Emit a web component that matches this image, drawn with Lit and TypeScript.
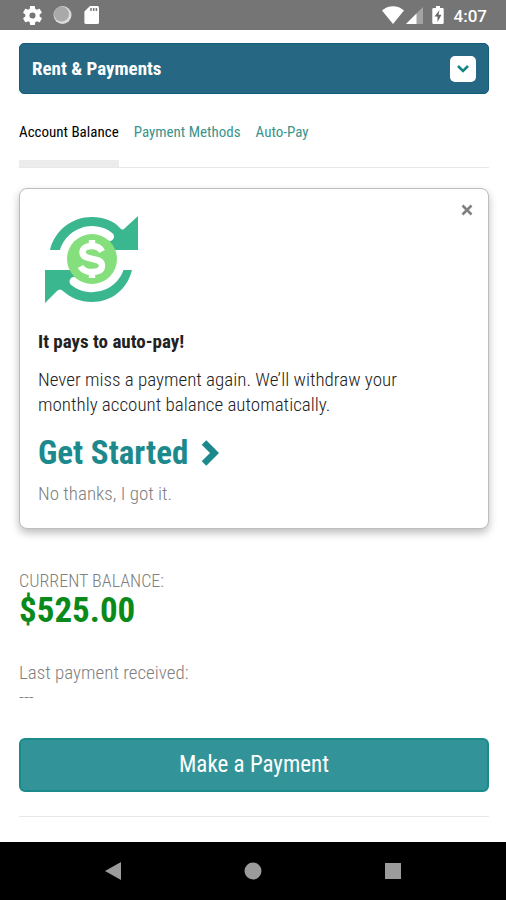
import { LitElement, html, css, svg } from "lit";
import { customElement, state } from "lit/decorators.js";

const gear = svg`<path fill="#fff" fill-rule="evenodd" d="M19.4 13c.04-.32.07-.65.07-1s-.03-.68-.07-1l2.1-1.65c.2-.15.25-.42.13-.64l-2-3.46c-.12-.22-.4-.3-.61-.22l-2.5 1c-.52-.4-1.08-.73-1.7-.98l-.37-2.65A.5.5 0 0 0 14 2h-4c-.25 0-.46.18-.5.42l-.37 2.65c-.62.25-1.18.59-1.7.98l-2.5-1c-.22-.08-.49 0-.61.22l-2 3.46c-.13.22-.07.49.12.64L4.57 11c-.04.32-.07.66-.07 1s.03.68.07 1l-2.13 1.65c-.19.15-.25.42-.12.64l2 3.46c.12.22.39.3.61.22l2.5-1c.52.4 1.08.73 1.7.98l.37 2.65c.04.24.25.42.5.42h4c.25 0 .46-.18.5-.42l.37-2.65c.62-.25 1.18-.58 1.7-.98l2.5 1c.22.08.49 0 .61-.22l2-3.46c.12-.22.07-.49-.13-.64zM12 15.2a3.2 3.2 0 1 1 0-6.4 3.2 3.2 0 0 1 0 6.4z"/>`;

@customElement("status-bar")
class StatusBar extends LitElement {
  static styles = css`
    :host {
      display: flex;
      align-items: center;
      justify-content: space-between;
      height: 30px;
      padding: 0 19px 0 21px;
      background: #757575;
      color: #fff;
      font: 500 17px/30px Roboto, sans-serif;
    }
    .group {
      display: flex;
      align-items: center;
    }
    .left {
      gap: 8px;
    }
    svg {
      display: block;
    }
    .time {
      margin-left: 6px;
      padding-top: 2px;
    }
  `;
  render() {
    return html`
      <div class="group left">
        <svg width="23" height="23" viewBox="0 0 24 24" aria-hidden="true">${gear}</svg>
        <svg width="22" height="22" viewBox="0 0 22 22" aria-hidden="true">
          <circle cx="10.500" cy="11" r="9" fill="#dcdcdc" />
          <circle cx="9.500" cy="10" r="7.600" fill="#a9a9a9" />
        </svg>
        <svg width="20" height="20" viewBox="0 0 20 20" aria-hidden="true">
          <path fill="#fff" d="M8 1h7.400A1.600 1.600 0 0 1 17 2.600v14.800A1.600 1.600 0 0 1 15.400 19H4a1.600 1.600 0 0 1-1.600-1.600V6.500z" />
          <path stroke="#757575" stroke-width="1.500" d="M9 3v3M11.700 3v3M14.400 3v3" />
        </svg>
      </div>
      <div class="group">
        <svg width="24" height="20" viewBox="0 0 24 20" aria-hidden="true">
          <path fill="#fff" d="M0 5.500C6-.3 16-.3 22 5.500L11 19z" />
        </svg>
        <svg width="22" height="20" viewBox="0 0 22 20" aria-hidden="true">
          <path fill="#a3a3a3" d="M17 2v17H0z" />
          <path fill="#fff" d="M10.500 8.500V19H0z" />
        </svg>
        <svg width="20" height="20" viewBox="0 0 20 20" aria-hidden="true">
          <path fill="#fff" d="M8 1h4v2h2.500A1.200 1.200 0 0 1 15.700 4.200v13.600a1.200 1.200 0 0 1-1.200 1.200h-9a1.200 1.200 0 0 1-1.200-1.200V4.200A1.200 1.200 0 0 1 5.500 3H8z" />
          <path fill="#666" d="M11.500 5 6.500 11.500h3V17l4-7.200h-3z" />
        </svg>
        <span class="time">4:07</span>
      </div>
    `;
  }
}

@customElement("auto-pay-card")
class AutoPayCard extends LitElement {
  static styles = css`
    :host {
      display: block;
      position: relative;
      box-sizing: border-box;
      padding: 23px 18px 21px;
      border: 1px solid #bdbdbd;
      border-radius: 8px;
      background: #fff;
      box-shadow: 0 4px 8px rgba(0, 0, 0, 0.26);
    }
    .close {
      position: absolute;
      top: 10px;
      right: 10px;
      padding: 5px;
      border: 0;
      background: none;
      cursor: pointer;
    }
    svg {
      display: block;
    }
    h2 {
      margin: 23px 0 0;
      font-size: 19px;
      line-height: 26px;
      font-weight: 700;
      color: #222;
    }
    p {
      margin: 12px 0 0;
      max-width: 380px;
      font-size: 19px;
      line-height: 25px;
      font-weight: 300;
      color: #222;
    }
    .start {
      display: flex;
      align-items: center;
      gap: 13px;
      width: max-content;
      margin-top: 16px;
      font-size: 33px;
      line-height: 40px;
      font-weight: 700;
      color: #1c8a8c;
      text-decoration: none;
    }
    .dismiss {
      display: block;
      margin-top: 8px;
      padding: 0;
      border: 0;
      background: none;
      font-family: inherit;
      font-size: 19px;
      line-height: 26px;
      font-weight: 300;
      color: #808080;
      cursor: pointer;
    }
  `;
  render() {
    return html`
      <button class="close" aria-label="Close">
        <svg width="12" height="12" viewBox="0 0 12 12">
          <path stroke="#808080" stroke-width="2.600" d="m1.500 1.500 9 9m0-9-9 9" />
        </svg>
      </button>
      <svg width="108" height="94" viewBox="38 212 108 94" aria-hidden="true">
        <path fill="#3bb78f" d="M50 250C55 230 72 217 92 217c12 0 22 4 28 11 2 2 3 2 5 0l13-12v34z" />
        <path fill="#3bb78f" d="M132 270c-5 20-21 32-40 32-12 0-21-4-29-11-2-2-4-2-6 0l-12 12v-33z" />
        <path
          fill="none"
          stroke="#fff"
          stroke-width="9"
          stroke-linecap="round"
          d="M63 259A29 29 0 0 1 109.500 236.500M121 259A29 29 0 0 1 74 281.500"
        />
        <circle cx="92" cy="259" r="25" fill="#86df7d" />
        <path fill="none" stroke="#fff" stroke-width="6.400" d="M102 251.500c-2-4-6-5.500-10-5.500-6 0-9.500 2.500-9.500 6.500 0 9 19.500 3.500 19.500 13 0 4.500-4 6.500-10 6.500-5.500 0-9.500-2-11.500-5.500M92 240v6.500M92 271.500v6.500" />
      </svg>
      <h2>It pays to auto-pay!</h2>
      <p>Never miss a payment again. We’ll withdraw your monthly account balance automatically.</p>
      <a class="start" href="#auto-pay">
        Get Started
        <svg width="18" height="26" viewBox="0 0 18 26" aria-hidden="true">
          <path fill="none" stroke="#1c8a8c" stroke-width="6.400" d="m3 2.500 10.500 10.500L3 23.500" />
        </svg>
      </a>
      <button class="dismiss">No thanks, I got it.</button>
    `;
  }
}

@customElement("app-root")
class AppRoot extends LitElement {
  @state() private active = 0;

  private tabs = ["Account Balance", "Payment Methods", "Auto-Pay"];

  static styles = css`
    :host {
      display: flex;
      flex-direction: column;
      min-height: 100vh;
      background: #fff;
      font-family: "Roboto Condensed", Roboto, sans-serif;
    }
    svg {
      display: block;
    }
    main {
      flex: 1;
      padding: 13px 17px 24px 19px;
    }
    .section {
      display: flex;
      align-items: center;
      justify-content: space-between;
      box-sizing: border-box;
      width: 100%;
      height: 51px;
      padding: 0 12px;
      border: 1px solid #135c7b;
      border-radius: 5px;
      background: #266883;
      color: #fff;
      font: inherit;
      font-size: 19px;
      font-weight: 700;
      cursor: pointer;
    }
    .box {
      display: grid;
      place-items: center;
      width: 26px;
      height: 26px;
      border-radius: 5px;
      background: #fff;
    }
    .tabs {
      display: flex;
      gap: 15px;
      margin: 25px 0 20px;
      border-bottom: 1px solid #e8e8e8;
    }
    .tab {
      box-sizing: border-box;
      height: 48px;
      border-bottom: 7px solid transparent;
      color: #3a938c;
      font-size: 15px;
      line-height: 26px;
      text-decoration: none;
    }
    .tab.on {
      border-color: #ececec;
      color: #000;
    }
    dl {
      margin: 40px 0 29px;
      color: #808080;
      font-weight: 300;
    }
    dt,
    dd {
      margin: 0;
      font-size: 19px;
      line-height: 24px;
    }
    .label {
      font-size: 18px;
    }
    .amount {
      margin-bottom: 32px;
      font-size: 35px;
      line-height: 36px;
      font-weight: 700;
      color: #0b8a1c;
    }
    .pay {
      display: block;
      width: 100%;
      height: 54px;
      padding: 0 0 2px;
      border: 2px solid #1a8a8a;
      border-radius: 6px;
      background: #329498;
      color: #fff;
      font: inherit;
      font-size: 23px;
      cursor: pointer;
    }
    hr {
      margin: 24px 0 0;
      border: 0;
      border-top: 1px solid #e8e8e8;
    }
    .system {
      display: flex;
      justify-content: center;
      align-items: center;
      gap: 116px;
      height: 58px;
      background: #000;
    }
    .system button {
      padding: 0;
      border: 0;
      background: none;
    }
  `;

  render() {
    return html`
      <status-bar></status-bar>
      <main>
        <button class="section">
          Rent &amp; Payments
          <span class="box">
            <svg width="14" height="10" viewBox="0 0 14 10" aria-hidden="true">
              <path fill="none" stroke="#168585" stroke-width="2.600" d="m2 2 5 5 5-5" />
            </svg>
          </span>
        </button>
        <nav class="tabs">
          ${this.tabs.map(
            (t, i) => html`<a
              class="tab ${i === this.active ? "on" : ""}"
              href="#tab-${i}"
              @click=${() => (this.active = i)}
              >${t}</a
            >`
          )}
        </nav>
        <auto-pay-card></auto-pay-card>
        <dl>
          <dt class="label">CURRENT BALANCE:</dt>
          <dd class="amount">$525.00</dd>
          <dt>Last payment received:</dt>
          <dd>---</dd>
        </dl>
        <button class="pay">Make a Payment</button>
        <hr />
      </main>
      <div class="system">
        <button aria-label="Back">
          <svg width="24" height="24" viewBox="0 0 24 24"><path fill="#9b9b9b" d="M20 3v18L4 12z" /></svg>
        </button>
        <button aria-label="Home">
          <svg width="24" height="24" viewBox="0 0 24 24"><circle cx="12" cy="12" r="8.500" fill="#9b9b9b" /></svg>
        </button>
        <button aria-label="Recent apps">
          <svg width="24" height="24" viewBox="0 0 24 24"><path fill="#9b9b9b" d="M4 4h16v16H4z" /></svg>
        </button>
      </div>
    `;
  }
}
